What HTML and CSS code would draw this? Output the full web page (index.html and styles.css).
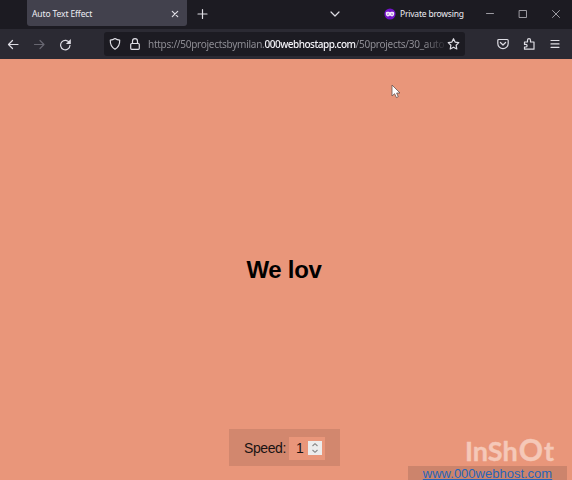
FILE: index.html
```html
<!DOCTYPE html>
<html lang="en">
<head>
<meta charset="utf-8">
<title>Auto Text Effect</title>
<link rel="stylesheet" href="styles.css">
</head>
<body>
<header class="tabs">
  <div class="tab"><span class="tab-title">Auto Text Effect</span>
    <svg class="icon tab-close" viewBox="0 0 12 12"><path d="M3.3 3.3l5.4 5.4M8.7 3.3L3.3 8.7"/></svg>
  </div>
  <svg class="icon new-tab" viewBox="0 0 12 12"><path d="M6.500 1.500v9M2 6h9"/></svg>
  <svg class="icon list-tabs" viewBox="0 0 12 12"><path d="M2 4l4 4 4-4"/></svg>
  <svg class="mask" viewBox="0 0 12 12"><circle class="mask-bg" cx="6" cy="6" r="5.6"/><path class="mask-face" fill-rule="evenodd" d="M1.8 4.8C2 3.7 4 3.6 6 4.3c2-.7 4-.6 4.2.5.3 1.7-.5 3.5-2 3.6C7 8.5 6.6 7.5 6 7.5s-1 1-2.200.9c-1.500-.1-2.300-1.900-2-3.600zM3 5.900a1.200.8 0 002.200.2A1.300.8 0 003 5.900zm3.800.2A1.200.8 0 009 5.900a1.300.8 0 00-2.200.2z"/></svg>
  <span class="private">Private browsing</span>
  <nav class="window-controls">
    <svg class="icon" viewBox="0 0 12 12"><path d="M2.500 5.500h7"/></svg>
    <svg class="icon" viewBox="0 0 12 12"><path d="M2.500 2.500h7v7h-7z"/></svg>
    <svg class="icon" viewBox="0 0 12 12"><path d="M2.500 2.500l7 7M9.500 2.500l-7 7"/></svg>
  </nav>
</header>
<div class="toolbar">
  <nav class="history">
    <svg class="icon" viewBox="0 0 14 14"><path d="M12 7.500H2.500M6.500 3.500l-4 4 4 4"/></svg>
    <svg class="icon disabled" viewBox="0 0 14 14"><path d="M2.500 7.500H12M8 3.500l4 4-4 4"/></svg>
    <svg class="icon" viewBox="0 0 14 14"><path d="M11.500 6A4.700 4.700 0 1 0 12 8.300"/><path class="solid" d="M12.800 2v4.900H7.900z"/></svg>
  </nav>
  <div class="urlbar">
    <svg class="icon" viewBox="0 0 14 14"><path d="M7 1.500c1.500 1 3 1.500 4.700 1.600.2 4.200-1.200 7.200-4.700 9.200-3.500-2-4.900-5-4.700-9.200C4 3 5.500 2.500 7 1.500z"/></svg>
    <svg class="icon lock" viewBox="0 0 14 14"><rect x="2.700" y="6.500" width="8.600" height="5.800" rx="1"/><path d="M4.500 6.500V4.200a2.500 2.500 0 0 1 5 0v2.300"/></svg>
    <span class="url">https://50projectsbymilan.<b>000webhostapp.com</b>/50projects/30_auto</span>
    <svg class="icon star" viewBox="0 0 14 14"><path d="M7.500 1.700l1.600 3.400 3.700.5-2.700 2.600.7 3.800-3.300-1.800L4.200 12l.7-3.800-2.700-2.600 3.700-.5z"/></svg>
  </div>
  <nav class="actions">
    <svg class="icon" viewBox="0 0 14 14"><path d="M2.800 2.500h8.400a1 1 0 0 1 1 1V6.500a5.200 5.200 0 0 1-10.400 0v-3a1 1 0 0 1 1-1zM4.400 5.500L7 8l2.600-2.500"/></svg>
    <svg class="icon" viewBox="0 0 14 14"><path d="M2.500 5h3V3.200a1.500 1.500 0 0 1 3 0V5h3.500v7.200H2.500V10h1.300a1.300 1.300 0 0 0 0-2.600H2.500z"/></svg>
    <svg class="icon" viewBox="0 0 14 14"><path d="M3 3.500h8M3 6.900h8M3 10.300h8"/></svg>
  </nav>
</div>
<main class="page">
  <h1 class="text">We lov</h1>
  <div class="speed"><label>Speed:</label>
    <div class="number"><span>1</span><svg class="spinner" viewBox="0 0 14 14"><path d="M4.500 5L7 2.700 9.500 5M4.500 9L7 11.300 9.500 9"/></svg></div>
  </div>
  <div class="watermark">InSh<span class="big-o">O</span>t</div>
  <div class="host"><a>www.000webhost.com</a></div>
  <svg class="cursor" viewBox="0 0 10 15"><path d="M1 1v11l2.600-2.300L5.400 13.600l1.900-.9L5.600 9H9z"/></svg>
</main>
</body>
</html>
```
FILE: styles.css
```css
* { box-sizing: border-box; }
body {
  margin: 0;
  height: 480px;
  overflow: hidden;
  display: flex;
  flex-direction: column;
  background: #e9967a;
  font-family: "Noto Sans", sans-serif;
}
svg { display: block; flex: none; }
.icon {
  width: 12px;
  height: 12px;
  fill: none;
  stroke: #dedde4;
  stroke-width: 1.2;
  stroke-linecap: round;
  stroke-linejoin: round;
}
.tabs {
  height: 29px;
  flex: none;
  display: flex;
  align-items: center;
  padding: 0 10px 2px 27px;
  background: #1c1b22;
}
.tab {
  width: 160px;
  height: 26px;
  margin-top: -1px;
  display: flex;
  align-items: center;
  justify-content: space-between;
  padding: 1px 6px 0 5px;
  border-radius: 0 0 3px 3px;
  background: #42414d;
}
.tab-title, .private {
  color: #eeedf3;
  font-size: 8.5px;
  line-height: 12px;
  white-space: nowrap;
}
.tab-title { letter-spacing: -.12px; }
.new-tab { margin-left: 9px; }
.list-tabs { margin-left: 121px; }
.mask { width: 12px; height: 12px; margin-left: 43px; }
.mask-bg { fill: #7311c9; }
.mask-face { fill: #f0e8fa; }
.private { width: 65px; margin-left: 4px; letter-spacing: -.2px; }
.window-controls { display: flex; gap: 21px; margin-left: auto; }
.window-controls .icon { stroke: #aaa9b0; stroke-width: .9; }
.toolbar {
  height: 30px;
  flex: none;
  display: flex;
  align-items: center;
  padding: 0 10px 0 6px;
  background: #2b2a33;
}
.toolbar .icon { width: 14px; height: 14px; }
.toolbar .disabled { stroke: #686771; }
.toolbar .solid { fill: #dedde4; stroke: none; }
.history, .actions { display: flex; gap: 12px; }
.urlbar {
  width: 361px;
  height: 24px;
  margin-left: 32px;
  display: flex;
  align-items: center;
  padding: 0 5px 0 4px;
  border-radius: 3px;
  background: #1c1b22;
}
.lock { margin-left: 6px; }
.url {
  width: 296px;
  margin-left: 6px;
  overflow: hidden;
  white-space: nowrap;
  color: #8d8c93;
  font-size: 10px;
  line-height: 14px;
  letter-spacing: -.27px;
  -webkit-mask-image: linear-gradient(to right, #000 276px, transparent 300px);
  mask-image: linear-gradient(to right, #000 276px, transparent 300px);
}
.url b { color: #f4f3f8; font-weight: 500; letter-spacing: -.5px; }
.star { margin-left: auto; }
.actions { margin-left: auto; }
.page {
  position: relative;
  flex: 1;
  background: #e9967a;
  font-family: "Liberation Sans", Arial, sans-serif;
}
.text {
  margin: 197px 0 0;
  padding-right: 4px;
  text-align: center;
  color: #000;
  font-size: 24px;
  line-height: 28px;
  letter-spacing: -.3px;
}
.speed {
  position: absolute;
  left: 229px;
  top: 370px;
  width: 111px;
  height: 37px;
  display: flex;
  align-items: center;
  padding: 1px 0 0 15px;
  background: #d2876e;
  color: #191313;
  font-size: 14px;
}
.speed label { width: 45px; letter-spacing: -.4px; }
.number {
  width: 36px;
  height: 23px;
  display: flex;
  align-items: center;
  justify-content: space-between;
  padding: 0 3px 0 7px;
  background: #e9967a;
}
.spinner {
  width: 14px;
  height: 14px;
  background: #ececec;
  fill: none;
  stroke: #858585;
  stroke-width: 1.1;
}
.watermark {
  position: absolute;
  left: 465px;
  top: 375px;
  display: flex;
  align-items: baseline;
  color: #f5c8b8;
  font-family: Lato, sans-serif;
  font-weight: 700;
  font-size: 27px;
  line-height: 30px;
  -webkit-text-stroke: .4px #f5c8b8;
}
.big-o { margin: 0 1px; font-size: 30px; }
.host {
  position: absolute;
  left: 408px;
  top: 407px;
  width: 159px;
  height: 14px;
  overflow: hidden;
  text-align: center;
  background: #cc846c;
  font-size: 13px;
  line-height: 15px;
}
.host a { color: #2864b8; text-decoration: underline; }
.cursor {
  position: absolute;
  left: 391px;
  top: 25px;
  width: 10px;
  height: 15px;
  fill: #fff;
  stroke: #65534f;
  stroke-width: .8;
}
```
